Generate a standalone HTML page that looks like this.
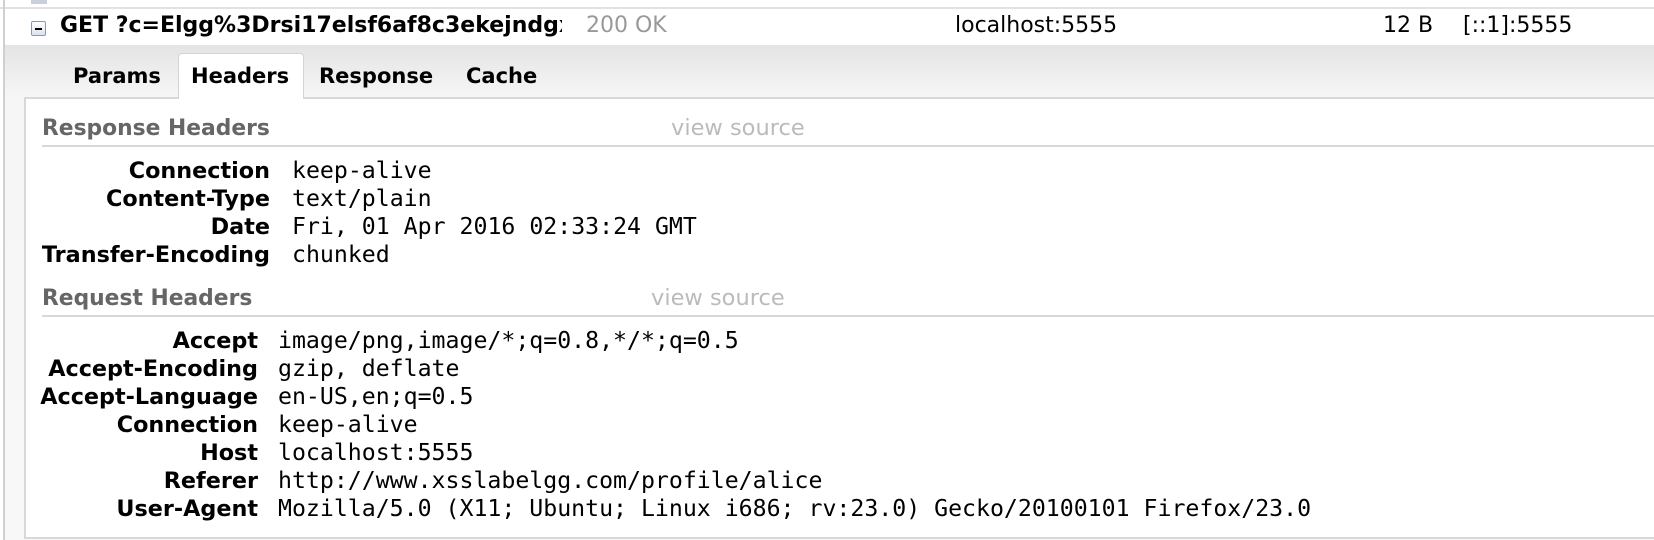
<!DOCTYPE html>
<html><head><meta charset="utf-8"><style>
*{margin:0;padding:0;box-sizing:border-box}
body{width:1654px;height:540px;overflow:hidden;background:#fff;position:relative;font-family:"DejaVu Sans","Liberation Sans",sans-serif;color:#000}
.a{position:absolute;white-space:nowrap;line-height:1}
.b{font-weight:bold}
.lbl{position:absolute;font-weight:bold;font-size:22.3px;line-height:28px;text-align:right;white-space:nowrap}
.val{position:absolute;font-family:"DejaVu Sans Mono","Liberation Mono",monospace;font-size:23.2px;line-height:28px;white-space:nowrap}
.ttl{position:absolute;font-weight:bold;font-size:21.8px;color:#666;line-height:1}
.vs{position:absolute;font-size:22.5px;color:#bbb;line-height:1}
</style></head><body>
<div style="position:absolute;left:0;top:0;width:1654px;height:9px;background:#fff;border-bottom:2px solid #e2e2e2"></div>
<div style="position:absolute;left:31px;top:0;width:16px;height:4px;background:#c8d0dc"></div>
<div style="position:absolute;left:3px;top:0;width:2px;height:540px;background:#d0d0d0"></div>
<div style="position:absolute;left:31px;top:21px;width:15px;height:15px;border:1px solid #8898b0;background:linear-gradient(#fff,#dde3ea);border-radius:2px"></div>
<div style="position:absolute;left:35px;top:28px;width:7px;height:2px;background:#000"></div>
<div class="a b" style="left:60px;top:15px;font-size:22px;width:502px;overflow:hidden">GET ?c=Elgg%3Drsi17elsf6af8c3ekejndgxyz</div>
<div class="a" style="left:586px;top:15px;font-size:22px;color:#999">200 OK</div>
<div class="a" style="left:955px;top:15px;font-size:22px">localhost:5555</div>
<div class="a" style="left:1383px;top:15px;font-size:22px">12 B</div>
<div class="a" style="left:1463px;top:15px;font-size:22px">[::1]:5555</div>
<div style="position:absolute;left:5px;top:45px;width:1649px;height:495px;background:linear-gradient(#e4e4e4 0px,#f6f6f6 52px,#f8f8f8 100%)"></div>
<div style="position:absolute;left:178px;top:53px;width:126px;height:46px;background:#fff;border:1px solid #d4d4d4;border-bottom:none;border-radius:4px 4px 0 0;z-index:2"></div>
<div style="position:absolute;left:24px;top:97px;width:1640px;height:442px;background:#fff;border:2px solid #d8d8d8;z-index:1"></div>
<div style="position:absolute;left:179px;top:96px;width:124px;height:4px;background:#fff;z-index:3"></div>
<div class="a b" style="left:73px;top:66px;font-size:21px;z-index:4">Params</div>
<div class="a b" style="left:191px;top:66px;font-size:21px;z-index:4">Headers</div>
<div class="a b" style="left:319px;top:66px;font-size:21px;z-index:4">Response</div>
<div class="a b" style="left:466px;top:66px;font-size:21px;z-index:4">Cache</div>
<div style="position:absolute;left:0;top:0;width:1654px;height:540px;z-index:5">
<div class="ttl" style="left:42px;top:118px">Response Headers</div>
<div class="vs" style="left:671px;top:117px">view source</div>
<div style="position:absolute;left:42px;top:145px;width:1612px;height:2px;background:#d8d8d8"></div>
<div class="lbl" style="right:1384px;top:157px">Connection<br>Content-Type<br>Date<br>Transfer-Encoding</div>
<div class="val" style="left:292px;top:157px">keep-alive<br>text/plain<br>Fri, 01 Apr 2016 02:33:24 GMT<br>chunked</div>
<div class="ttl" style="left:42px;top:288px">Request Headers</div>
<div class="vs" style="left:651px;top:287px">view source</div>
<div style="position:absolute;left:42px;top:315px;width:1612px;height:2px;background:#d8d8d8"></div>
<div class="lbl" style="right:1396px;top:327px">Accept<br>Accept-Encoding<br>Accept-Language<br>Connection<br>Host<br>Referer<br>User-Agent</div>
<div class="val" style="left:278px;top:327px">image/png,image/*;q=0.8,*/*;q=0.5<br>gzip, deflate<br>en-US,en;q=0.5<br>keep-alive<br>localhost:5555<br>http://www.xsslabelgg.com/profile/alice<br>Mozilla/5.0 (X11; Ubuntu; Linux i686; rv:23.0) Gecko/20100101 Firefox/23.0</div>
</div>
</body></html>
